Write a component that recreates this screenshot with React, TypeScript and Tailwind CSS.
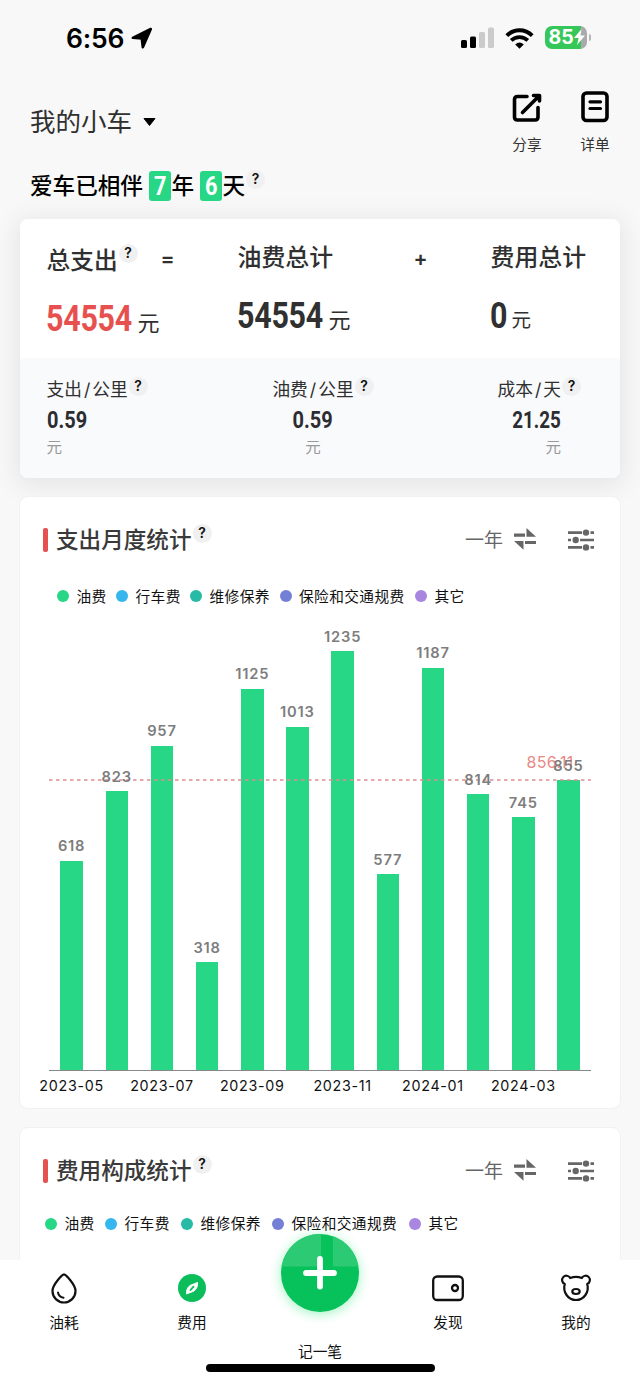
import type { ReactNode } from 'react';

const fonts = 'font-["Inter","Noto_Sans_CJK_SC",sans-serif]';

type BarItem = { v: number; m?: string };

const PX_PER_UNIT = 0.339;

const bars: BarItem[] = [
  { v: 618, m: '2023-05' },
  { v: 823 },
  { v: 957, m: '2023-07' },
  { v: 318 },
  { v: 1125, m: '2023-09' },
  { v: 1013 },
  { v: 1235, m: '2023-11' },
  { v: 577 },
  { v: 1187, m: '2024-01' },
  { v: 814 },
  { v: 745, m: '2024-03' },
  { v: 855 },
];

const legend = [
  { label: '油费', first: 'w-[59px]', second: 'w-[60px]', color: 'bg-[#28d786]' },
  { label: '行车费', first: 'w-[74px]', second: 'w-[76px]', color: 'bg-[#36b6ef]' },
  { label: '维修保养', first: 'w-[89.5px]', second: 'w-[91px]', color: 'bg-[#27bba5]' },
  { label: '保险和交通规费', first: 'w-[135.5px]', second: 'w-[137px]', color: 'bg-[#747fd6]' },
  { label: '其它', first: 'w-[60px]', second: 'w-[60px]', color: 'bg-[#a886e0]' },
];

function Help({ className = '' }: { className?: string }) {
  return (
    <span className={`flex h-[19px] w-[19px] shrink-0 items-center justify-center rounded-full bg-[#f0f0f0] text-[14px] leading-none font-semibold text-[#111] ${className}`}>
      <span className="-mt-px">?</span>
    </span>
  );
}

function Din({ children, size, className = '' }: { children: ReactNode; size: 'lg' | 'sm'; className?: string }) {
  return size === 'lg' ? (
    <span className={`inline-block origin-left scale-x-[0.845] font-[Roboto] text-[36px] leading-[36px] font-bold tracking-[-0.3px] ${className}`}>{children}</span>
  ) : (
    <span className={`inline-block font-[Roboto] text-[23.5px] leading-[24px] font-bold text-[#2b2d30] ${className}`}>{children}</span>
  );
}

function SectionHeader({ title }: { title: string }) {
  return (
    <div className="flex h-[28px] items-center pl-[23px] pr-[26px] text-[#3a3a3a]">
      <span className="h-[24px] w-[5px] rounded-[2px] bg-[#e6514f]" />
      <h2 className="ml-[8px] text-[22.6px] leading-[28px] font-medium">{title}</h2>
      <Help className="mb-[14px] ml-[1px]" />
      <span className="mt-[2px] ml-auto text-[19px] leading-[28px] text-[#666]">一年</span>
      <svg className="ml-[11px] h-[22px] w-[22px] -translate-y-px" viewBox="0 0 22 22" fill="#666">
        <path d="M12.5 0L22 8.700H12.500ZM0 5.600H11V8.700H0ZM0 13H9.500V21.700ZM11 13H22V16H11Z" />
      </svg>
      <svg className="ml-[32px] h-[22px] w-[26px]" viewBox="0 0 26 22" fill="#666">
        <path d="M0 2.300H14V4.900H0ZM22.500 2.300H26V4.900H22.500ZM0 9.700H3V12.300H0ZM12 9.700H26V12.300H12ZM0 17.100H14V19.700H0ZM22.500 17.100H26V19.700H22.500Z" />
        <circle cx="18" cy="3.600" r="3.200" />
        <circle cx="7.700" cy="11" r="3.200" />
        <circle cx="18" cy="18.400" r="3.200" />
      </svg>
    </div>
  );
}

function Legend({ second = false }: { second?: boolean }) {
  return (
    <div className={`flex h-[20px] items-center ${second ? 'pl-[25px]' : 'pl-[37px]'}`}>
      {legend.map((l) => (
        <div key={l.label} className={`flex shrink-0 items-center ${second ? l.second : l.first}`}>
          <span className={`h-[12px] w-[12px] shrink-0 rounded-full ${l.color}`} />
          <span className={`ml-[7.5px] text-[14.7px] leading-[20px] tracking-[0.4px] whitespace-nowrap text-[#111] ${second ? '' : 'mt-[2px]'}`}>{l.label}</span>
        </div>
      ))}
    </div>
  );
}

function StatusBar() {
  return (
    <div className="flex h-[76px] items-center pl-[66px] pr-[49px]">
      <span className="text-[26.5px] leading-none font-semibold tracking-[-0.2px] text-black">6:56</span>
      <svg className="ml-[7px] h-[22px] w-[22px]" viewBox="0 0 22 22">
        <path d="M1.800 10.800L19.800 2L11.800 20.200L10.800 11.500Z" stroke="#000" strokeWidth="2.600" strokeLinejoin="round" />
      </svg>
      <svg className="ml-auto h-[22px] w-[33px]" viewBox="0 0 33 22">
        <rect x="0" y="13" width="6" height="8" rx="1.500" />
        <rect x="9" y="9.500" width="6" height="11.500" rx="1.500" />
        <rect x="18" y="5" width="6" height="16" rx="1.500" fill="#cbcbcb" />
        <rect x="27" y="0.500" width="6" height="20.500" rx="1.500" fill="#cbcbcb" />
      </svg>
      <svg className="ml-[11px] h-[21px] w-[29px]" viewBox="0 0 29 21" fill="none" stroke="#000">
        <path d="M1.800 7.600C9 0.500 20 0.500 27.200 7.600" strokeWidth="4" />
        <path d="M6.200 12.400C11 7.900 18 7.900 22.800 12.400" strokeWidth="3.800" />
        <path d="M10.200 16.500Q14.500 12.700 18.800 16.500L14.500 20.700Z" fill="#000" stroke="none" />
      </svg>
      <div className="ml-[11px] flex h-[23px] w-[42px] -translate-y-px items-center overflow-hidden rounded-[7px] bg-[linear-gradient(90deg,#35c759_36px,#aaaaad_36px)] pl-[3.5px] text-white">
        <span className="mt-[2px] text-[19.5px] leading-none font-bold">85</span>
        <svg className="h-[16px] w-[11px]" viewBox="0 0 11 16" fill="#fff">
          <path d="M7.500 0L0 9H4.600L3 16L11 6.500H6.500Z" />
        </svg>
      </div>
      <span className="ml-[2px] h-[7px] w-[2px] -translate-y-px rounded-r-full bg-[#b5b5b8]" />
    </div>
  );
}

function TotalCard() {
  return (
    <section className="mx-[20px] h-[259px] overflow-hidden rounded-[8px] bg-white text-[#303030]">
      <div className="flex h-[139px] pt-[24px]">
        <div className="w-[217.5px] pl-[26.5px]">
          <div className="flex h-[34px] items-center">
            <span className="mt-[2px] text-[23.7px] leading-[34px] font-medium">总支出</span>
            <Help className="mb-[13px] ml-[1px]" />
            <span className="-mt-[4px] ml-[23px] text-[21px] leading-none font-semibold">=</span>
          </div>
          <div className="mt-[22px] flex h-[38px] items-end">
            <span className="-ml-[0.5px] w-[91.5px]"><Din size="lg" className="text-[#e6514f]">54554</Din></span>
            <span className="text-[22px] leading-[28px]">元</span>
          </div>
        </div>
        <div className="w-[253px]">
          <div className="flex h-[30px] items-center">
            <span className="text-[23.9px] leading-[30px] font-medium">油费总计</span>
            <span className="ml-[80.5px] text-[21px] leading-none font-semibold">+</span>
          </div>
          <div className="mt-[23px] flex h-[38px] items-end">
            <span className="-ml-[0.5px] w-[91.5px]"><Din size="lg">54554</Din></span>
            <span className="text-[22px] leading-[28px]">元</span>
          </div>
        </div>
        <div>
          <div className="text-[23.9px] leading-[30px] font-medium">费用总计</div>
          <div className="mt-[23px] flex h-[38px] items-end">
            <span className="-ml-px w-[22px]"><Din size="lg">0</Din></span>
            <span className="text-[19.500px] leading-[28px]">元</span>
          </div>
        </div>
      </div>
      <div className="flex h-[120px] bg-[#f9fafc] pl-[26.5px] pt-[19px]">
        <Rate label="支出/公里" value="0.59" className="w-[225px] items-start" num="origin-left scale-x-[0.85]" />
        <Rate label="油费/公里" value="0.59" className="w-[83px] items-center" num="scale-x-[0.85]" />
        <Rate label="成本/天" value="21.25" className="w-[206.5px] items-end" num="origin-right scale-x-[0.8]" />
      </div>
    </section>
  );
}

function Rate({ label, value, className, num }: { label: string; value: string; className: string; num: string }) {
  const [before, after] = label.split('/');
  return (
    <div className={`flex shrink-0 flex-col ${className}`}>
      <div className="relative text-[17.7px] leading-[26px] whitespace-nowrap">
        {before}<span className="mx-[2px]">/</span>{after}
        <Help className="absolute top-0 left-full ml-[1px]" />
      </div>
      <div className="mt-[4.5px] h-[24px]"><Din size="sm" className={num}>{value}</Din></div>
      <div className="mt-[6.5px] text-[15.500px] leading-[20px] text-[#999]">元</div>
    </div>
  );
}

function Chart() {
  return (
    <div className="relative mx-[29px] mt-[17px] h-[478px] w-[542px]">
      <div className="flex h-[448px] items-end border-b border-[#888]">
        {bars.map((b, i) => (
          <div key={i} className="flex min-w-0 flex-1 flex-col items-center">
            <span className="relative z-10 mb-[5.5px] text-[14.700px] leading-[18px] font-semibold tracking-[0.8px] text-[#7d7d7d]">{b.v}</span>
            <span className="w-[22.5px] bg-[#28d786]" style={{ height: b.v * PX_PER_UNIT }} />
          </div>
        ))}
      </div>
      <div className="flex h-[30px]">
        {bars.map((b, i) => (
          <div key={i} className="flex min-w-0 flex-1 justify-center">
            <span className="mt-[6px] text-[14.300px] leading-[18px] tracking-[0.7px] whitespace-nowrap text-[#111]">{b.m}</span>
          </div>
        ))}
      </div>
      <svg className="absolute top-[156px] left-0 h-[2px] w-[542px]" viewBox="0 0 542 2">
        <path d="M0 1H542" stroke="#df8d8d" strokeWidth="1.500" strokeDasharray="3.500 3.500" />
      </svg>
      <span className="absolute top-[129px] left-[477.5px] text-[16px] leading-[20px] tracking-[0.3px] text-[#e88985]">856.11</span>
    </div>
  );
}

function Tab({ icon, label }: { icon: ReactNode; label: string }) {
  return (
    <div className="flex w-[128px] flex-col items-center pt-[12px]">
      <div className="flex h-[32px] items-center">{icon}</div>
      <span className="mt-[9px] text-[14.700px] leading-[20px] text-[#111]">{label}</span>
    </div>
  );
}

function DaysBadge({ children }: { children: ReactNode }) {
  return (
    <span className="mr-[0.5px] ml-[6px] flex h-[30px] w-[22px] items-center justify-center rounded-[3px] bg-[#28d786] font-[Roboto] text-[25px] leading-none font-bold text-white">
      <span className="mt-px scale-x-[0.87]">{children}</span>
    </span>
  );
}

export default function App() {
  return (
    <div className={`relative h-[1384px] w-[640px] overflow-hidden bg-[#f8f8f8] ${fonts}`}>
      <StatusBar />
      <header className="flex h-[92px] items-start pl-[30px]">
        <div className="flex items-center pt-[27.5px]">
          <span className="text-[25.500px] leading-[36px] text-[#303030]">我的小车</span>
          <svg className="ml-[11px] h-[10px] w-[13px]" viewBox="0 0 13 10">
            <path d="M1 1.500H12L6.500 8.500Z" stroke="#000" strokeWidth="1" strokeLinejoin="round" />
          </svg>
        </div>
        <div className="ml-auto flex pt-[14px] pr-[11px] text-[14.700px] leading-[20px] text-[#333]">
          <div className="flex w-[68px] flex-col items-center">
            <svg className="h-[34px] w-[34px]" viewBox="0 0 34 34" fill="none" stroke="#000" strokeWidth="3.600" strokeLinecap="round" strokeLinejoin="round">
              <path d="M17 6.500H7.500Q4.500 6.500 4.500 9.500V27Q4.500 30 7.500 30H25Q28 30 28 27V17.500M12.500 22.500L29 6M23.500 5.500H29.500V11" />
            </svg>
            <span className="mt-[10.5px]">分享</span>
          </div>
          <div className="flex w-[68px] flex-col items-center">
            <svg className="h-[34px] w-[34px]" viewBox="0 0 34 34" fill="none" stroke="#000" strokeWidth="3.600" strokeLinecap="round">
              <rect x="5" y="3" width="24" height="27.500" rx="3.500" />
              <path d="M12 11.800H22.500M12 18.500H22.500" strokeWidth="3.200" />
            </svg>
            <span className="mt-[10.5px]">详单</span>
          </div>
        </div>
      </header>
      <div className="flex h-[33px] items-center pt-[3px] pl-[30px] text-[22.600px] leading-[34px] font-medium text-black">
        <span>爱车已相伴</span>
        <DaysBadge>7</DaysBadge>
        <span>年</span>
        <DaysBadge>6</DaysBadge>
        <span>天</span>
        <Help className="mb-[13px] ml-[1px]" />
      </div>
      <div className="pt-[18px] [&>section]:shadow-[0_4px_26px_4px_rgba(0,0,0,0.08)]">
        <TotalCard />
      </div>
      <section className="relative mx-[19px] mt-[18px] h-[613px] rounded-[9px] border border-[#f1f1f1] bg-white pt-[29px]">
        <SectionHeader title="支出月度统计" />
        <div className="mt-[32px]"><Legend /></div>
        <Chart />
      </section>
      <section className="mx-[19px] mt-[18px] h-[160px] rounded-[9px] border border-[#f1f1f1] bg-white pt-[29px]">
        <SectionHeader title="费用构成统计" />
        <div className="mt-[29px]"><Legend second /></div>
      </section>
      <nav className="absolute inset-x-0 bottom-0 h-[124px] bg-white">
        <div className="flex">
          <Tab label="油耗" icon={
            <svg className="h-[32px] w-[28px]" viewBox="0 0 28 32" fill="none" stroke="#111" strokeWidth="2.200" strokeLinecap="round">
              <path d="M14 2.300C12.500 2.300 2.500 12.500 2.500 19A11.500 11.500 0 0 0 25.500 19C25.500 12.500 15.500 2.300 14 2.300Z" />
              <path d="M8 20.500Q8.800 25 13.500 25.700" strokeWidth="2" />
            </svg>
          } />
          <Tab label="费用" icon={
            <svg className="h-[28px] w-[28px]" viewBox="0 0 28 28">
              <circle cx="14" cy="14" r="14" fill="#0bbd5b" />
              <path d="M8.500 20Q8 14.500 12 11.500L19.500 8.500Q20 14 16 17Z" fill="#fff" stroke="#fff" strokeLinejoin="round" />
              <path d="M12.500 16L15.500 12.600" stroke="#0bbd5b" strokeWidth="1.800" strokeLinecap="round" />
            </svg>
          } />
          <div className="flex w-[128px] justify-center pt-[81.5px] text-[14.700px] leading-[20px] text-[#111]">记一笔</div>
          <Tab label="发现" icon={
            <svg className="h-[28px] w-[34px]" viewBox="0 0 34 28" fill="none" stroke="#111" strokeWidth="2.300">
              <rect x="2.200" y="2.500" width="29.600" height="23.500" rx="4" />
              <circle cx="24" cy="14" r="3" />
            </svg>
          } />
          <Tab label="我的" icon={
            <svg className="h-[30px] w-[32px]" viewBox="0 0 32 30" fill="none" stroke="#111" strokeWidth="2.200" strokeLinecap="round" strokeLinejoin="round">
              <path d="M4.800 11A4.300 4.300 0 1 1 10.200 5Q16 2.600 21.800 5A4.300 4.300 0 1 1 27.200 11C29.500 19 24 27 16 27C8 27 2.500 19 4.800 11Z" />
              <ellipse cx="16" cy="18.500" rx="3.700" ry="2.500" />
            </svg>
          } />
        </div>
        <div className="absolute -top-[26px] left-[281px] flex h-[78px] w-[78px] items-center justify-center rounded-full bg-[#07c15a] shadow-[0_2px_12px_rgba(40,230,120,0.45)]">
          <svg className="h-[78px] w-[78px]" viewBox="0 0 78 78" fill="none">
            <path d="M0.500 32.500A39 39 0 0 1 40 0V32.500Z" fill="#2cca72" />
            <path d="M52 2.200A39 39 0 0 1 77.500 32.500H52Z" fill="#2cca72" />
            <path d="M39 25V52.500M25 39H53" stroke="#fff" strokeWidth="5.800" strokeLinecap="round" />
          </svg>
        </div>
        <div className="absolute bottom-[12px] left-[206px] h-[8px] w-[229px] rounded-full bg-black" />
      </nav>
    </div>
  );
}
